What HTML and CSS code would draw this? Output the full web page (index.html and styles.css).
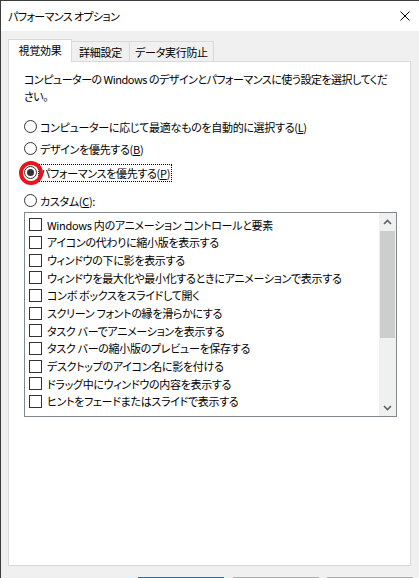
FILE: index.html
```html
<!DOCTYPE html>
<html lang="ja">
<head>
<meta charset="utf-8">
<title>パフォーマンス オプション</title>
<link rel="stylesheet" href="styles.css">
</head>
<body>
<div class="window">
  <div class="titlebar">
    <span class="title">パフォーマンス オプション</span>
    <span class="close" aria-label="閉じる">
      <svg width="10" height="10" viewBox="0 0 10 10"><path d="M0.5 0.5 L9.5 9.5 M9.5 0.5 L0.5 9.5" stroke="#000" stroke-width="1" fill="none"/></svg>
    </span>
  </div>
  <div class="tabs">
    <div class="tab selected">視覚効果</div>
    <div class="tab t2">詳細設定</div>
    <div class="tab t3">データ実行防止</div>
  </div>
  <div class="panel">
    <p class="desc">コンピューターの Windows のデザインとパフォーマンスに使う設定を選択してくだ<br>さい。</p>
    <div class="radios">
      <div class="radio r1"><span class="dot"></span><span class="label">コンピューターに応じて最適なものを自動的に選択する(<u>L</u>)</span></div>
      <div class="radio r2"><span class="dot"></span><span class="label">デザインを優先する(<u>B</u>)</span></div>
      <div class="radio r3 checked"><span class="dot"><span class="mark"></span></span><span class="label focus">パフォーマンスを優先する(<u>P</u>)</span><span class="highlight"></span></div>
      <div class="radio r4"><span class="dot"></span><span class="label">カスタム(<u>C</u>):</span></div>
    </div>
    <div class="listbox">
      <div class="items">
        <div class="item"><span class="box"></span>Windows 内のアニメーション コントロールと要素</div>
        <div class="item"><span class="box"></span>アイコンの代わりに縮小版を表示する</div>
        <div class="item"><span class="box"></span>ウィンドウの下に影を表示する</div>
        <div class="item"><span class="box"></span>ウィンドウを最大化や最小化するときにアニメーションで表示する</div>
        <div class="item"><span class="box"></span>コンボ ボックスをスライドして開く</div>
        <div class="item"><span class="box"></span>スクリーン フォントの縁を滑らかにする</div>
        <div class="item"><span class="box"></span>タスク バーでアニメーションを表示する</div>
        <div class="item"><span class="box"></span>タスク バーの縮小版のプレビューを保存する</div>
        <div class="item"><span class="box"></span>デスクトップのアイコン名に影を付ける</div>
        <div class="item"><span class="box"></span>ドラッグ中にウィンドウの内容を表示する</div>
        <div class="item"><span class="box"></span>ヒントをフェードまたはスライドで表示する</div>
      </div>
      <div class="scrollbar">
        <div class="sbtn">
          <svg width="9" height="6" viewBox="0 0 9 6"><path d="M1 5 L4.5 1.5 L8 5" stroke="#606060" stroke-width="1.6" fill="none"/></svg>
        </div>
        <div class="track"><div class="thumb"></div></div>
        <div class="sbtn">
          <svg width="9" height="6" viewBox="0 0 9 6"><path d="M1 1 L4.5 4.5 L8 1" stroke="#606060" stroke-width="1.6" fill="none"/></svg>
        </div>
      </div>
    </div>
  </div>
  <div class="buttons">
    <div class="btn default" aria-label="OK"></div>
    <div class="btn" aria-label="キャンセル"></div>
    <div class="btn" aria-label="適用"></div>
  </div>
</div>
</body>
</html>
```
FILE: styles.css
```css
html, body {
  margin: 0;
  padding: 0;
  width: 419px;
  height: 578px;
  overflow: hidden;
  background: #f0f0f0;
}
.window {
  width: 418px;
  height: 577px;
  border-left: 1px solid #3d3d3d;
  border-top: 1px solid #3d3d3d;
  background: #f0f0f0;
  font-family: "Noto Sans CJK JP", "Noto Sans", sans-serif;
  font-size: 11px;
  letter-spacing: -0.3px;
  color: #000;
  font-feature-settings: "palt";
  overflow: hidden;
}
.titlebar {
  height: 30px;
  background: #fff;
  display: flex;
  align-items: center;
  justify-content: space-between;
  padding-left: 7px;
  padding-right: 8px;
}
.title {
  line-height: 16px;
  letter-spacing: -0.6px;
}
.close {
  display: flex;
  width: 10px;
  height: 10px;
  margin-right: 1px;
}
.tabs {
  display: flex;
  align-items: flex-end;
  margin-top: 8px;
  padding-left: 7px;
  height: 22px;
  position: relative;
  z-index: 1;
}
.tab {
  height: 20px;
  box-sizing: border-box;
  border: 1px solid #d9d9d9;
  border-bottom: none;
  background: #f0f0f0;
  line-height: 20px;
  margin-left: -1px;
  text-align: center;
  white-space: nowrap;
}
.tab.selected {
  height: 23px;
  width: 64px;
  margin-left: 0;
  margin-bottom: -1px;
  background: #fff;
  line-height: 21px;
}
.tab.t2 { width: 59px; }
.tab.t3 { width: 85px; }
.panel {
  margin-left: 7px;
  width: 403px;
  height: 505px;
  box-sizing: border-box;
  border: 1px solid #d9d9d9;
  background: #fff;
  padding: 9px 0 0 15px;
}
.desc {
  margin: 0;
  line-height: 17px;
  white-space: nowrap;
  letter-spacing: -0.5px;
}
.radios {
  display: flex;
  flex-direction: column;
  margin-top: 13px;
}
.radio {
  display: flex;
  align-items: center;
  height: 17px;
  position: relative;
}
.r2 { margin-top: 5px; }
.r3 { margin-top: 7px; }
.r4 { margin-top: 11px; }
.dot {
  width: 13px;
  height: 13px;
  box-sizing: border-box;
  border: 1px solid #333;
  border-radius: 50%;
  background: #fff;
  margin-right: 3px;
  display: flex;
  align-items: center;
  justify-content: center;
  flex: none;
}
.mark {
  width: 7px;
  height: 7px;
  border-radius: 50%;
  background: #333;
}
.label {
  line-height: 16px;
  padding: 0 1px;
  margin-left: -1px;
}
.label.focus {
  outline: 1px dotted #000;
  outline-offset: 0;
}
.highlight {
  position: absolute;
  left: -5.5px;
  top: -3px;
  width: 24px;
  height: 24px;
  box-sizing: border-box;
  border: 4px solid #e8141b;
  border-radius: 50%;
}
.listbox {
  margin-top: 3px;
  width: 373px;
  height: 205px;
  box-sizing: border-box;
  border: 1px solid #828790;
  display: flex;
}
.items {
  flex: 1;
  overflow: hidden;
  padding: 3px 0 0 4px;
}
.item {
  display: flex;
  align-items: center;
  height: 17.67px;
  line-height: 16px;
  white-space: nowrap;
}
.box {
  width: 13px;
  height: 13px;
  box-sizing: border-box;
  border: 1px solid #333;
  background: #fff;
  margin-right: 5px;
  flex: none;
}
.scrollbar {
  width: 17px;
  flex: none;
  background: #f0f0f0;
  display: flex;
  flex-direction: column;
}
.sbtn {
  height: 17px;
  display: flex;
  align-items: center;
  justify-content: center;
  flex: none;
}
.track {
  flex: 1;
  padding-top: 1px;
}
.thumb {
  height: 107px;
  margin: 0 1px;
  background: #cdcdcd;
}
.buttons {
  display: flex;
  margin-top: 11px;
  padding-left: 137px;
  gap: 8px;
}
.btn {
  width: 86px;
  height: 23px;
  box-sizing: border-box;
  border: 1px solid #adadad;
  background: #e1e1e1;
}
.btn.default {
  border: 2px solid #0078d7;
  margin-right: 1px;
}
```
